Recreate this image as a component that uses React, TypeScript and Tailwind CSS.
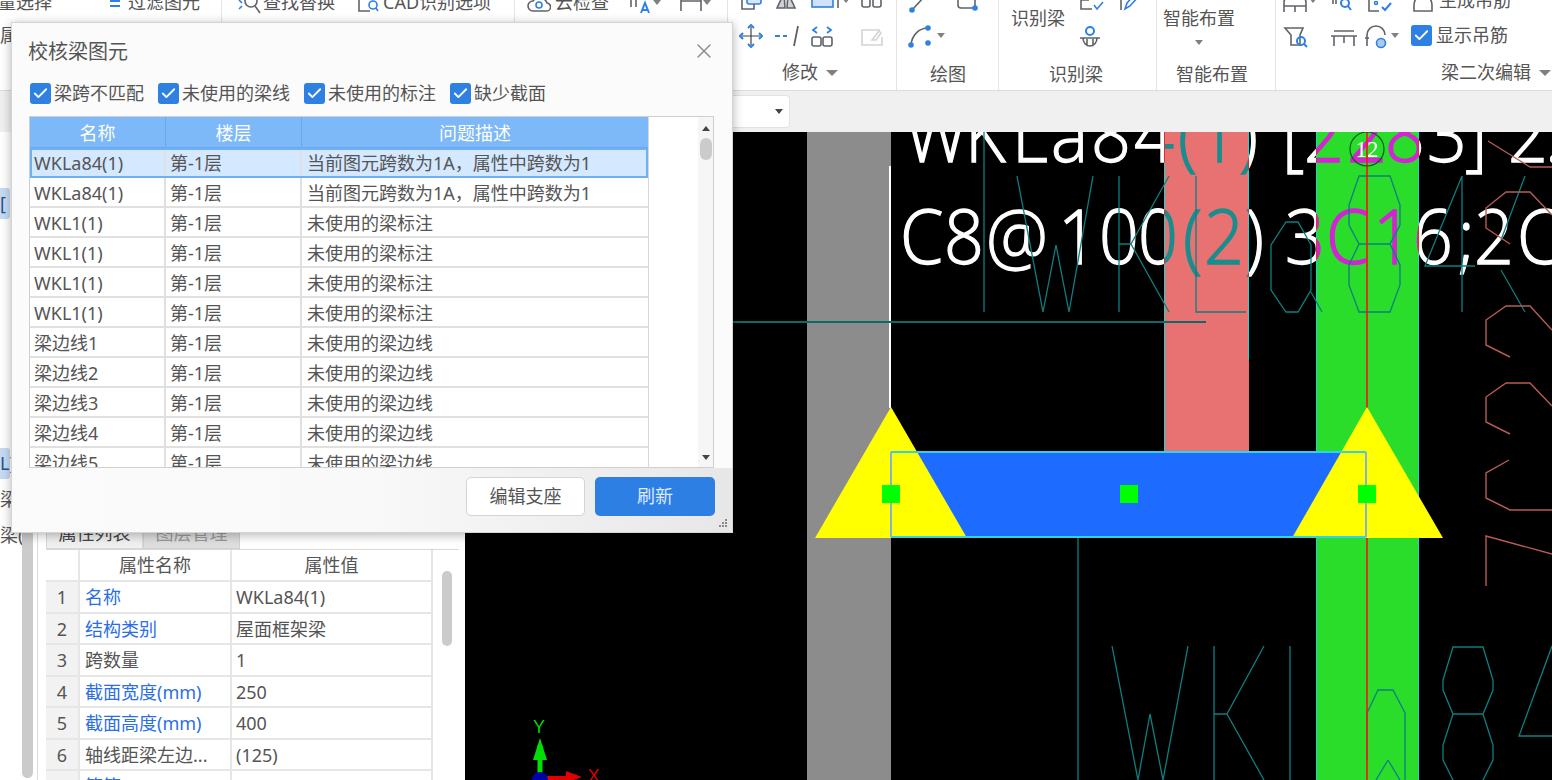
import React from 'react';
import { X, Check } from 'lucide-react';

const G = '#5f6368';
const B = '#2f80e3';

const Ico = ({ w = 24, h = 24, children }: { w?: number; h?: number; children: React.ReactNode }) => (
  <svg width={w} height={h} viewBox={`0 0 ${w} ${h}`} fill="none" strokeWidth={1.6} stroke={G} className="shrink-0">
    {children}
  </svg>
);

const Caret = () => <span className="block w-0 h-0 shrink-0 border-x-[4px] border-x-transparent border-t-[5px] border-t-[#808080]" />;

const Box = ({ className = '' }: { className?: string }) => (
  <span className={`flex items-center justify-center w-[21px] h-[21px] shrink-0 rounded-[3px] bg-[#2f80e3] ${className}`}>
    <Check size={17} color="#fff" strokeWidth={2.6} />
  </span>
);

// ribbon row: icons sit 35px apart vertically, top row is cut by the window edge
const RRow = ({ className = '', children }: { className?: string; children: React.ReactNode }) => (
  <div className={`flex items-center h-[35px] ${className}`}>{children}</div>
);

const Ribbon = () => (
  <div className="flex h-[91px] bg-white overflow-hidden border-b border-[#dcdcdc] text-[18px] text-[#555]">
    <div className="w-[222px] shrink-0 border-r border-[#e4e4e4] -mt-[15px]">
      <RRow className="-ml-[20px]">
        <span className="w-[130px]">批量选择</span>
        <span className="w-[18px] h-[20px] flex flex-col gap-[3px] pt-[2px]">
          <i className="block h-[2px] w-[10px] bg-[#2f80e3]" />
          <i className="block h-[2px] w-[10px] bg-[#2f80e3]" />
          <i className="block h-[2px] w-[10px] bg-[#2f80e3]" />
        </span>
        <span>过滤图元</span>
      </RRow>
      <RRow className="-mt-[2px]">
        <span className="w-[11px] overflow-hidden whitespace-nowrap">属性</span>
      </RRow>
    </div>
    <div className="w-[293px] shrink-0 border-r border-[#e4e4e4] -mt-[15px]">
      <RRow className="pl-[14px]">
        <Ico w={26} h={24}>
          <circle cx="15" cy="10" r="6" />
          <path d="M19 15l5 7" />
          <path d="M3 9l3 3M3 18l3-3" stroke={B} />
        </Ico>
        <span className="ml-[1px] w-[93px]">查找替换</span>
        <Ico w={26} h={24}>
          <path d="M3 3v17h11" />
          <circle cx="17" cy="14" r="4" stroke={B} />
          <path d="M20 17l2 3" stroke={B} />
        </Ico>
        <span className="ml-[1px] whitespace-nowrap">CAD识别选项</span>
      </RRow>
    </div>
    <div className="w-[213px] shrink-0 border-r border-[#e4e4e4] -mt-[15px]">
      <RRow className="pl-[12px]">
        <Ico w={24} h={24}>
          <path d="M6 20a5 5 0 0 1 0-10 8 8 0 0 1 14 2 4 4 0 0 1-1 8z" />
          <circle cx="12" cy="14" r="3" stroke={B} />
        </Ico>
        <span className="ml-[4px] w-[74px]">云检查</span>
        <Ico w={24} h={24}>
          <path d="M2 4v12M7 4v12" />
          <path d="M12 22l4-10 4 10M14 19h4" stroke={B} strokeWidth={2} />
        </Ico>
        <Caret />
        <span className="w-[18px]" />
        <Ico w={24} h={24}>
          <path d="M2 4v16M22 4v16M2 10h20" />
        </Ico>
        <Caret />
      </RRow>
    </div>
    <div className="w-[169px] shrink-0 border-r border-[#e4e4e4] flex flex-col">
      <div className="-mt-[17px] pl-[11px]">
        <RRow>
          <span className="w-[35px]">
            <Ico w={24} h={24}>
              <rect x="8" y="3" width="14" height="12" rx="2" stroke={B} fill="#d8e8fb" />
              <path d="M8 9H3v11h12v-5" />
            </Ico>
          </span>
          <span className="w-[36px]">
            <Ico w={24} h={24}>
              <path d="M10 4L3 19h8zM14 4l7 15h-8z" fill="#cfd3d8" />
            </Ico>
          </span>
          <span className="w-[50px] flex items-center">
            <Ico w={32} h={24}>
              <rect x="2" y="8" width="21" height="10" stroke={B} fill="#cfe2f8" />
              <path d="M28 4v15" />
            </Ico>
            <Caret />
          </span>
          <Ico w={24} h={24}>
            <rect x="2" y="9" width="8" height="9" rx="2" />
            <rect x="13" y="9" width="8" height="9" rx="2" />
          </Ico>
        </RRow>
        <RRow>
          <span className="w-[35px]">
            <Ico w={24} h={24}>
              <path d="M12 3v18M3 12h18" stroke="#444" strokeWidth={1.2} />
              <path d="M9 4l3-3 3 3M9 20l3 3 3-3M4 9l-3 3 3 3M20 9l3 3-3 3" stroke={B} strokeWidth={2} />
            </Ico>
          </span>
          <span className="w-[36px]">
            <Ico w={26} h={24}>
              <path d="M1 12h5M9 12h4" stroke={B} strokeWidth={2} />
              <path d="M24 2l-4 20" strokeWidth={1.8} />
            </Ico>
          </span>
          <span className="w-[50px]">
            <Ico w={24} h={24}>
              <path d="M7 3L3 6l4 3M17 3l4 3-4 3" stroke={B} strokeWidth={1.8} />
              <rect x="2" y="13" width="9" height="9" rx="2" />
              <rect x="13" y="13" width="9" height="9" rx="2" />
            </Ico>
          </span>
          <Ico w={24} h={24}>
            <path d="M20 6H2v15h20v-8" stroke="#d4d4d4" />
            <path d="M12 16l7-9 2 2-5 7z" stroke="#d4d4d4" />
          </Ico>
        </RRow>
      </div>
      <div className="flex items-center gap-[8px] pl-[54px] mt-[6px]">
        <span>修改</span>
        <span className="w-0 h-0 border-x-[6px] border-x-transparent border-t-[6px] border-t-[#808080]" />
      </div>
    </div>
    <div className="w-[102px] shrink-0 border-r border-[#e4e4e4] flex flex-col">
      <div className="-mt-[17px] pl-[11px]">
        <RRow>
          <span className="w-[47px]">
            <Ico w={24} h={24}>
              <path d="M4 21L16 8" />
              <circle cx="4" cy="21" r="2" fill={B} stroke={B} />
            </Ico>
          </span>
          <Ico w={24} h={24}>
            <path d="M3 4v12a3 3 0 0 0 3 3h14V4" />
            <circle cx="20" cy="19" r="2" fill={B} stroke={B} />
          </Ico>
        </RRow>
        <RRow>
          <Ico w={24} h={24}>
            <path d="M3 21C4 10 12 4 20 4" />
            <circle cx="3" cy="21" r="2" fill={B} stroke={B} />
            <circle cx="20" cy="4" r="2" fill={B} stroke={B} />
            <circle cx="20" cy="19" r="2" fill={B} stroke={B} />
          </Ico>
          <span className="ml-[5px] flex"><Caret /></span>
        </RRow>
      </div>
      <span className="pl-[33px] mt-[8px]">绘图</span>
    </div>
    <div className="w-[158px] shrink-0 border-r border-[#e4e4e4] flex flex-col">
      <div className="flex h-[53px]">
        <span className="pl-[12px] pt-[5px] w-[79px] whitespace-nowrap">识别梁</span>
        <div className="-mt-[17px]">
          <RRow>
            <span className="w-[38px]">
              <Ico w={28} h={24}>
                <path d="M14 3H3v17h11M3 11h8" />
                <path d="M16 16l3 4 6-7" stroke={B} />
              </Ico>
            </span>
            <Ico w={24} h={24}>
              <path d="M5 3v18" />
              <path d="M9 20l2-6 9-10 3 3-9 10z" stroke={B} />
            </Ico>
          </RRow>
          <RRow>
            <Ico w={24} h={24}>
              <circle cx="12" cy="7" r="4" stroke={B} strokeWidth={2} />
              <path d="M2 14h20M5 14a7 8 0 0 0 14 0M9 15v6M15 15v6" />
            </Ico>
          </RRow>
        </div>
      </div>
      <span className="pl-[50px] mt-[8px]">识别梁</span>
    </div>
    <div className="w-[119px] shrink-0 border-r border-[#e4e4e4] flex flex-col">
      <span className="pl-[6px] pt-[5px] h-[30px] whitespace-nowrap">智能布置</span>
      <span className="pl-[38px] pt-[10px] h-[31px] flex items-start"><Caret /></span>
      <span className="pl-[19px] whitespace-nowrap">智能布置</span>
    </div>
    <div className="flex-1 flex flex-col">
      <div className="-mt-[17px] pl-[2px]">
        <RRow>
          <span className="w-[53px] flex items-center pl-[3px]">
            <Ico w={28} h={24}>
              <path d="M3 23V13a10 6 0 0 1 22 0v10M3 17h22M14 17v6" />
            </Ico>
            <Caret />
          </span>
          <span className="w-[35px]">
            <Ico w={24} h={24}>
              <path d="M2 9v6M5 9v6" />
              <circle cx="14" cy="14" r="4" stroke={B} strokeWidth={2} />
              <path d="M17 17l3 4" stroke={B} strokeWidth={2} />
            </Ico>
          </span>
          <span className="w-[45px]">
            <Ico w={28} h={24}>
              <path d="M3 8v14h10M3 8h16" />
              <circle cx="10" cy="14" r="1.5" stroke={B} />
              <path d="M16 18l3 3 6-7" stroke={B} strokeWidth={2} />
            </Ico>
          </span>
          <Ico w={24} h={24}>
            <path d="M3 16a9 10 0 0 1 18 0v6H3z" />
          </Ico>
          <span className="ml-[4px] whitespace-nowrap">生成吊筋</span>
        </RRow>
        <RRow>
          <span className="w-[52px] pl-[5px]">
            <Ico w={28} h={24}>
              <path d="M2 4h18l-3 7v10H8V11z" />
              <circle cx="18" cy="17" r="4" stroke={B} strokeWidth={2} />
              <path d="M21 20l3 3" stroke={B} strokeWidth={2} />
            </Ico>
          </span>
          <span className="w-[34px]">
            <Ico w={28} h={24}>
              <path d="M4 7h20M1 12h26M4 12v10M24 12v10M14 12v7" />
            </Ico>
          </span>
          <Ico w={24} h={26}>
            <path d="M3 23V12a9 9 0 0 1 18 0" />
            <path d="M1 15h4" />
            <circle cx="17" cy="20" r="4.5" fill="#a9c9ef" stroke={B} />
          </Ico>
          <span className="ml-[3px] mr-[12px] flex"><Caret /></span>
          <Box />
          <span className="ml-[4px] whitespace-nowrap">显示吊筋</span>
        </RRow>
      </div>
      <div className="flex items-center justify-end gap-[8px] pr-[1px] mt-[6px]">
        <span className="whitespace-nowrap">梁二次编辑</span>
        <span className="w-0 h-0 border-x-[6px] border-x-transparent border-t-[6px] border-t-[#808080]" />
      </div>
    </div>
  </div>
);

const Toolbar = () => (
  <div className="flex items-center h-[41px] bg-[#f0f0f0] pl-[600px]">
    <div className="flex items-center justify-end w-[190px] h-[33px] pr-[6px] bg-white border border-[#e2e2e2] rounded-[4px]">
      <span className="w-0 h-0 border-x-[4px] border-x-transparent border-t-[5px] border-t-[#444]" />
    </div>
  </div>
);

const treeRows = [
  { top: 'mt-[56px]', text: '[', on: true },
  { top: 'mt-[229px]', text: 'L)', on: true },
  { top: 'mt-[5px]', text: '梁', on: false },
  { top: 'mt-[5px]', text: '梁(1', on: false },
];

const propRows = [
  { name: '名称', value: 'WKLa84(1)', blue: true },
  { name: '结构类别', value: '屋面框架梁', blue: true },
  { name: '跨数量', value: '1', blue: false },
  { name: '截面宽度(mm)', value: '250', blue: true },
  { name: '截面高度(mm)', value: '400', blue: true },
  { name: '轴线距梁左边...', value: '(125)', blue: false },
  { name: '箍筋', value: '#8@100(2)', blue: true },
];

const LeftPanel = () => (
  <div className="flex w-[465px] shrink-0 h-[648px] overflow-hidden bg-white text-[18px] text-[#555]">
    <div className="w-[22px] shrink-0 overflow-hidden">
      {treeRows.map((row, i) => (
        <div
          key={i}
          className={`${row.top} h-[31px] leading-[31px] whitespace-nowrap rounded-r-[3px] ${row.on ? 'bg-[#c6daf2] text-[#22518f] w-[10px]' : 'w-[22px]'}`}
        >
          {row.text}
        </div>
      ))}
    </div>
    <div className="w-[11px] shrink-0 mt-[170px] mb-[2px] rounded-full bg-[#cbcbcb]" />
    <div className="w-[5px] shrink-0 border-r border-[#dcdcdc]" />
    <div className="w-[8px] shrink-0" />
    <div className="w-[413px] shrink-0 pt-[393px]">
      <div className="flex h-[25px] border-b border-[#d8d8d8]">
        <span className="w-[97px] text-center text-[#444] bg-[#f0f0f0] border border-[#d8d8d8] leading-[15px]">属性列表</span>
        <span className="w-[97px] text-center text-[#999] bg-[#dedede] border border-[#d0d0d0] leading-[15px]">图层管理</span>
      </div>
      <div className="flex">
        <div className="w-[387px] shrink-0">
          <div className="flex h-[32px] border-b-2 border-[#e6e6e6]">
            <span className="w-[34px] border-r-2 border-[#e6e6e6]" />
            <span className="w-[152px] border-r-2 border-[#e6e6e6] text-center leading-[31px]">属性名称</span>
            <span className="flex-1 border-r-2 border-[#e6e6e6] text-center leading-[31px]">属性值</span>
          </div>
          {propRows.map((row, i) => (
            <div key={row.name} className="flex h-[31.5px] border-b-2 border-[#e6e6e6]">
              <span className="w-[34px] border-r-2 border-[#e6e6e6] bg-[#f2f2f2] text-center leading-[31px]">{i + 1}</span>
              <span className={`w-[152px] border-r-2 border-[#e6e6e6] pl-[5px] leading-[31px] whitespace-nowrap ${row.blue ? 'text-[#2a6ee8]' : ''}`}>
                {row.name}
              </span>
              <span className="flex-1 border-r-2 border-[#e6e6e6] pl-[4px] leading-[31px]">{row.value}</span>
            </div>
          ))}
        </div>
        <div className="w-[10px] h-[75px] ml-[9px] mt-[21px] rounded-full bg-[#cbcbcb]" />
      </div>
    </div>
  </div>
);

// cad text is narrower than the font, so squeeze it and place each glyph
const squeeze = 0.92;
const line1 = [905, 965, 1012, 1051, 1091, 1134, 1178, 1198, 1239, 1262, 1282, 1304, 1347, 1385, 1427, 1465, 1488, 1508, 1545];
const line2 = [900, 944, 986, 1058, 1099, 1138, 1183, 1204, 1245, 1268, 1285, 1326, 1373, 1413, 1458, 1474, 1517];
const toX = (xs: number[]) => xs.map((x) => (x / squeeze).toFixed(1)).join(' ');

const teal = '#0d7f80';
const rust = '#b65c55';

const Canvas = () => (
  <svg viewBox="465 132 1087 648" className="block w-[1087px] h-[648px] bg-black shrink-0 isolate">
    <rect x="807" y="132" width="84" height="648" fill="#8c8c8c" />
    <path d="M890 166V408" stroke="#fff" strokeWidth={2} />
    <rect x="1164" y="132" width="85" height="319" fill="#e87272" />
    <rect x="1316" y="132" width="103" height="648" fill="#2bdd2b" />
    <path d="M1164.5 132V451M1248.5 132V360M1316.5 132V780M1418.5 132V780" stroke="#22d3d3" strokeWidth={1} />
    {/* white on the coloured bands inverts, like the cad xor pen */}
    <g transform={`scale(${squeeze} 1)`} fill="#fff" stroke="#fff" strokeWidth={1.3} fontSize={76} className="mix-blend-difference font-light font-['Open_Sans',sans-serif]">
      <text y={162} x={toX(line1)}>WKLa84(1) [2283] 2.</text>
      <text y={264} x={toX(line2)}>C8@100(2) 3C16;2C</text>
    </g>
    <g fill="none" stroke={teal} strokeWidth={1.3}>
      <path d="M733 322H1206" stroke="#0b6a6c" strokeWidth={2} />
      <path d="M984 132V312" />
      <path d="M1017 176L1043 312L1056 245L1069 312L1093 176" />
      <path d="M1119 176V312M1169 176L1131 244L1169 312M1119 244H1131" />
      <path d="M1196 176V312H1246" />
      <path d="M1286 222H1298L1311 245V290L1298 312H1286L1271 290V245ZM1311 292L1322 312" />
      <path d="M1349 205L1359 176H1390L1400 205V225L1390 244H1359L1349 225ZM1359 244L1349 265V285L1359 312H1390L1400 285V265L1390 244" />
      <path d="M1462 176L1425 266H1475M1462 176V312" />
      <path d="M1525 176L1501 240M1501 270L1525 312" />
      <path d="M1078 495V780" />
      <path d="M1112 646L1138 780M1150 714L1138 780M1150 714L1163 780L1188 646" />
      <path d="M1214 646V780M1264 646L1227 714L1264 780M1214 714H1227" />
      <path d="M1290 646V780" />
      <path d="M1443 680L1453 647H1483L1493 680V690L1483 714H1453L1443 690ZM1453 714L1443 745V760L1453 780M1483 714L1493 745V760L1483 780" />
      <path d="M1552 646L1519 736H1552" />
      <path d="M1367 713L1378 690H1393L1405 713V780M1367 713V760M1388 760L1376 780M1388 760L1400 780" />
    </g>
    <g fill="none" stroke={rust} strokeWidth={1.4}>
      <path d="M1488 141L1530 167H1552" />
      <path d="M1552 215L1530 192H1506L1486 208V228L1510 244" />
      <path d="M1552 330L1530 306H1506L1486 320V345L1510 357" />
      <path d="M1552 406L1530 383H1506L1486 397V422L1510 434" />
      <path d="M1509 460L1486 473V498L1510 510H1552" />
      <path d="M1552 554L1486 536V586" />
    </g>
    <path d="M1367 132V780" stroke="#ff1010" strokeWidth={1.6} />
    <circle cx="1367" cy="149" r="17" fill="none" stroke="#0a5a20" strokeWidth={1.2} />
    <text x="1367" y="157" fontSize={23} textAnchor="middle" fill="#fff" className="font-['Liberation_Serif',serif]">12</text>
    <polygon points="900,452 1360,452 1320,537 940,537" fill="#1e6bff" />
    <polygon points="891,407 815,538 967,538" fill="#ffff00" />
    <polygon points="1367,407 1292,538 1443,538" fill="#ffff00" />
    <path d="M891 452H1366M891 537H1366" fill="none" stroke="#2fd4e8" strokeWidth={2} />
    <path d="M891 452V537M1366 452V537" fill="none" stroke="#7fb4d8" strokeWidth={2} />
    <rect x="882" y="485" width="18" height="18" fill="#00ff00" />
    <rect x="1120" y="485" width="18" height="18" fill="#00ff00" />
    <rect x="1358" y="485" width="18" height="18" fill="#00ff00" />
    <path d="M540 745V776" stroke="#00e000" strokeWidth={5} />
    <polygon points="540,738 533,760 547,760" fill="#00e000" />
    <path d="M540 778H566" stroke="#e00000" strokeWidth={4} />
    <polygon points="582,777 566,771 566,783" fill="#e00000" />
    <circle cx="540" cy="780" r="8" fill="#0000a8" />
    <text x="533" y="733" fontSize={18} fill="#00e000" className="font-['Liberation_Sans',sans-serif]">Y</text>
    <text x="588" y="782" fontSize={18} fill="#e00000" className="font-['Liberation_Sans',sans-serif]">X</text>
  </svg>
);

const checkItems = [
  { label: '梁跨不匹配', w: 'w-[128px]' },
  { label: '未使用的梁线', w: 'w-[146px]' },
  { label: '未使用的标注', w: 'w-[146px]' },
  { label: '缺少截面', w: 'w-[100px]' },
];

const issueRows = [
  ['WKLa84(1)', '第-1层', '当前图元跨数为1A，属性中跨数为1'],
  ['WKLa84(1)', '第-1层', '当前图元跨数为1A，属性中跨数为1'],
  ['WKL1(1)', '第-1层', '未使用的梁标注'],
  ['WKL1(1)', '第-1层', '未使用的梁标注'],
  ['WKL1(1)', '第-1层', '未使用的梁标注'],
  ['WKL1(1)', '第-1层', '未使用的梁标注'],
  ['梁边线1', '第-1层', '未使用的梁边线'],
  ['梁边线2', '第-1层', '未使用的梁边线'],
  ['梁边线3', '第-1层', '未使用的梁边线'],
  ['梁边线4', '第-1层', '未使用的梁边线'],
  ['梁边线5', '第-1层', '未使用的梁边线'],
];

const Dialog = () => (
  <div className="absolute left-[11px] top-[22px] w-[722px] h-[511px] flex flex-col bg-[#fbfbfb] border border-[#d4d4d4] shadow-[0_2px_10px_rgba(0,0,0,0.3)] text-[18px] text-[#555]">
    <div className="flex items-center justify-between h-[55px] pl-[16px] pr-[16px]">
      <span className="text-[20px] text-[#555] pt-[2px]">校核梁图元</span>
      <X size={24} color="#8f8f8f" strokeWidth={1.5} />
    </div>
    <div className="flex items-center h-[23px] mt-[4px] pl-[18px]">
      {checkItems.map((item) => (
        <div key={item.label} className={`flex items-center gap-[3px] whitespace-nowrap ${item.w}`}>
          <Box />
          <span>{item.label}</span>
        </div>
      ))}
    </div>
    <div className="flex ml-[17px] mt-[11px] w-[685px] h-[352px] shrink-0 overflow-hidden bg-white border border-[#cfcfcf]">
      <div className="w-[619px] shrink-0 border-r border-[#d8d8d8]">
        <div className="flex h-[31px] bg-[#7db8f8] text-white border-b border-[#6aa9ef] text-center leading-[32px]">
          <span className="w-[136px] border-r border-[#6aa9ef]">名称</span>
          <span className="w-[136px] border-r border-[#6aa9ef]">楼层</span>
          <span className="flex-1">问题描述</span>
        </div>
        {issueRows.map((row, i) => (
          <div
            key={i}
            className={`flex h-[30px] leading-[30px] ${i === 0 ? 'bg-[#d4e8ff] outline-2 -outline-offset-2 outline-[#6fb0f5]' : 'border-b-2 border-[#e0e0e0]'}`}
          >
            <span className="w-[136px] pl-[4px] border-r-2 border-[#e0e0e0]">{row[0]}</span>
            <span className="w-[136px] pl-[4px] border-r-2 border-[#e0e0e0]">{row[1]}</span>
            <span className="flex-1 pl-[5px] whitespace-nowrap">{row[2]}</span>
          </div>
        ))}
      </div>
      <div className="w-[49px] shrink-0" />
      <div className="flex-1 flex flex-col items-center bg-[#f6f6f6] pt-[9px] pb-[7px]">
        <span className="w-0 h-0 border-x-[4px] border-x-transparent border-b-[5px] border-b-[#444]" />
        <span className="w-[12px] h-[22px] mt-[7px] rounded-full bg-[#cbcbcb]" />
        <span className="w-0 h-0 mt-auto border-x-[4px] border-x-transparent border-t-[5px] border-t-[#444]" />
      </div>
    </div>
    <div className="flex-1 flex items-start justify-end gap-[10px] pt-[9px] pr-[17px] bg-gradient-to-r from-[#fbfbfb] via-[#f9f9f9] to-[#e7e7e7]">
      <button className="w-[119px] h-[39px] rounded-[5px] bg-white border border-[#d4d4d4] text-[#555]">编辑支座</button>
      <button className="w-[120px] h-[39px] rounded-[5px] bg-[#2e7fe3] text-[#dcebff]">刷新</button>
    </div>
    <div className="absolute right-[5px] bottom-[5px] grid grid-cols-3 gap-[1px]">
      {[0, 0, 1, 0, 1, 1, 1, 1, 1].map((on, i) => (
        <i key={i} className={`block w-[2px] h-[2px] ${on ? 'bg-[#8a8a8a]' : ''}`} />
      ))}
    </div>
  </div>
);

export default function App() {
  return (
    <div className="relative w-[1552px] h-[780px] overflow-hidden bg-[#f0f0f0] font-['Noto_Sans','Noto_Sans_CJK_SC',sans-serif]">
      <Ribbon />
      <Toolbar />
      <div className="flex">
        <LeftPanel />
        <Canvas />
      </div>
      <Dialog />
    </div>
  );
}
